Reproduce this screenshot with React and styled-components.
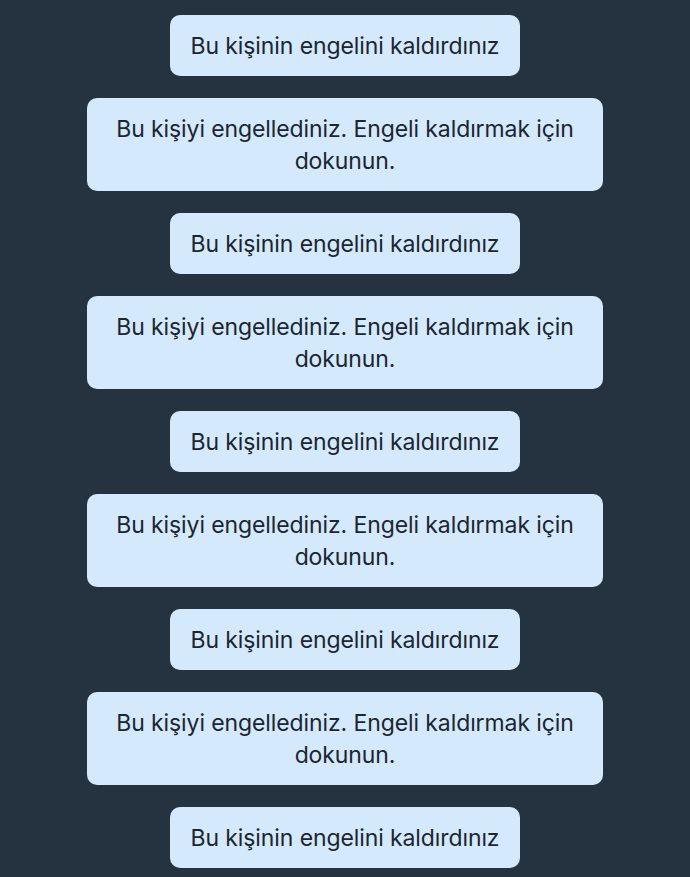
import React from 'react';
import styled, { createGlobalStyle } from 'styled-components';

const GlobalStyle = createGlobalStyle`
  html, body {
    margin: 0;
    padding: 0;
    background: #24333f;
  }
  body {
    font-family: Inter, "Noto Sans", sans-serif;
  }
`;

const Feed = styled.div`
  display: flex;
  flex-direction: column;
  align-items: center;
  gap: 22px;
  padding: 15px 0 0;
  min-height: 877px;
  box-sizing: border-box;
  background: #24333f;
`;

const Notice = styled.button`
  box-sizing: border-box;
  width: ${props => (props.wide ? '516px' : 'auto')};
  padding: 14.5px 21px;
  border: 0;
  border-radius: 10px;
  background: #d4e9fb;
  color: #1b2631;
  font-family: Inter, "Noto Sans", sans-serif;
  font-size: 23px;
  line-height: 32px;
  letter-spacing: -0.1px;
  text-align: center;
  white-space: ${props => (props.wide ? 'normal' : 'nowrap')};
  cursor: pointer;
`;

const messages = [
  { id: 1, text: 'Bu kişinin engelini kaldırdınız' },
  { id: 2, text: 'Bu kişiyi engellediniz. Engeli kaldırmak için dokunun.', wide: true },
  { id: 3, text: 'Bu kişinin engelini kaldırdınız' },
  { id: 4, text: 'Bu kişiyi engellediniz. Engeli kaldırmak için dokunun.', wide: true },
  { id: 5, text: 'Bu kişinin engelini kaldırdınız' },
  { id: 6, text: 'Bu kişiyi engellediniz. Engeli kaldırmak için dokunun.', wide: true },
  { id: 7, text: 'Bu kişinin engelini kaldırdınız' },
  { id: 8, text: 'Bu kişiyi engellediniz. Engeli kaldırmak için dokunun.', wide: true },
  { id: 9, text: 'Bu kişinin engelini kaldırdınız' }
];

export default function App() {
  return (
    <>
      <GlobalStyle />
      <Feed>
        {messages.map(m => (
          <Notice key={m.id} wide={m.wide}>{m.text}</Notice>
        ))}
      </Feed>
    </>
  );
}
